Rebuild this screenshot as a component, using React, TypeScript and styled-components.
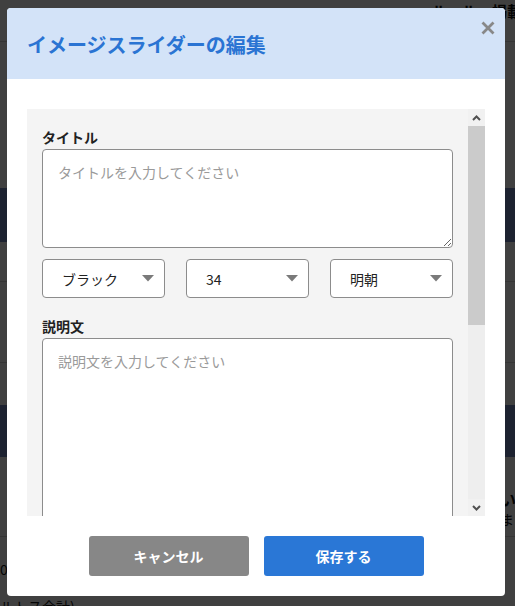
import React from "react";
import styled, { createGlobalStyle } from "styled-components";

const GlobalStyle = createGlobalStyle`
  html, body { margin: 0; padding: 0; }
  body {
    font-family: "Noto Sans CJK JP", "Noto Sans", sans-serif;
    background: #ffffff;
    overflow: hidden;
  }
  * { box-sizing: border-box; }
`;

/* ---------- background page ---------- */

const Page = styled.div`
  width: 515px;
  height: 606px;
  overflow: hidden;
  display: flex;
  flex-direction: column;
  color: #111;
`;

const TopBar = styled.header`
  height: 42px;
  flex-shrink: 0;
  border-bottom: 1px solid #d4d4d4;
  display: flex;
  justify-content: flex-end;
  align-items: flex-start;
  white-space: nowrap;
  overflow: hidden;
`;

const TopBarText = styled.span`
  font-size: 15px;
  font-weight: 700;
  line-height: 22px;
  margin-right: -7px;
`;

const Band = styled.div<{ $h: number; $tone?: "navy" | "plain"; $line?: boolean }>`
  height: ${(p) => p.$h}px;
  flex-shrink: 0;
  background: ${(p) => (p.$tone === "navy" ? "#7488c0" : "#ffffff")};
  border-bottom: ${(p) => (p.$line ? "1px solid #d4d4d4" : "none")};
`;

const InfoBand = styled(Band)`
  display: flex;
  flex-direction: column;
  padding: 32px 0 0 500px;
  white-space: nowrap;
`;

const InfoStrong = styled.span`
  font-size: 16px;
  font-weight: 700;
  line-height: 20px;
`;

const InfoText = styled.span`
  font-size: 14px;
  line-height: 20px;
`;

const FootBand = styled.div`
  flex: 1;
  display: flex;
  flex-direction: column;
  padding-top: 22px;
  white-space: nowrap;
`;

const FootText = styled.span`
  font-size: 14px;
  line-height: 20px;
  margin-bottom: 17px;
`;

/* ---------- modal ---------- */

const Overlay = styled.div`
  position: fixed;
  inset: 0;
  background: rgba(0, 0, 0, 0.75);
  display: flex;
  align-items: flex-start;
  padding: 8px 0 0 7px;
`;

const Dialog = styled.div`
  position: relative;
  width: 498px;
  height: 588px;
  background: #ffffff;
  border-radius: 4px;
  overflow: hidden;
  display: flex;
  flex-direction: column;
`;

const Header = styled.div`
  height: 71px;
  flex-shrink: 0;
  background: #d3e3f8;
  display: flex;
  align-items: center;
  padding: 2px 20px 0;
`;

const Title = styled.h2`
  margin: 0;
  font-size: 20px;
  font-weight: 700;
  line-height: 28px;
  color: #2a74d3;
`;

const CloseButton = styled.button`
  position: absolute;
  top: 12px;
  right: 9px;
  width: 16px;
  height: 16px;
  padding: 0;
  border: none;
  background: transparent;
  display: flex;
  align-items: center;
  justify-content: center;
  cursor: pointer;
`;

const Body = styled.div`
  flex: 1;
  display: flex;
  flex-direction: column;
  gap: 20px;
  padding: 30px 20px 20px;
`;

const Panel = styled.div`
  height: 407px;
  flex-shrink: 0;
  background: #f4f4f4;
  display: flex;
`;

const ScrollContent = styled.div`
  flex: 1;
  min-width: 0;
  overflow-y: auto;
  scrollbar-width: none;
  padding: 18px 15px 20px;
`;

const ScrollRail = styled.div`
  width: 17px;
  flex-shrink: 0;
  display: flex;
  flex-direction: column;
  background: #eeeeee;
`;

const RailButton = styled.div`
  height: 17px;
  flex-shrink: 0;
  background: #f1f1f1;
  display: flex;
  align-items: center;
  justify-content: center;
`;

const RailThumb = styled.div<{ $h: number }>`
  height: ${(p) => p.$h}px;
  flex-shrink: 0;
  background: #cbcbcb;
`;

const RailTrack = styled.div`
  flex: 1;
`;

const Field = styled.div<{ $gap?: number }>`
  display: flex;
  flex-direction: column;
  margin-top: ${(p) => p.$gap ?? 0}px;
`;

const Label = styled.label`
  font-size: 14px;
  font-weight: 700;
  line-height: 20px;
  color: #222;
  margin-bottom: 2px;
`;

const TextArea = styled.textarea<{ $h: number }>`
  display: block;
  width: 100%;
  height: ${(p) => p.$h}px;
  border: 1px solid #8c8c8c;
  border-radius: 4px;
  background: #ffffff;
  padding: 12px 15px;
  font-family: inherit;
  font-size: 14px;
  line-height: 20px;
  color: #222;
  resize: vertical;
  outline: none;
  &::placeholder { color: #9a9a9a; }
`;

const TextInput = styled.input`
  display: block;
  width: 100%;
  height: 40px;
  border: 1px solid #8c8c8c;
  border-radius: 4px;
  background: #ffffff;
  padding: 0 15px;
  font-family: inherit;
  font-size: 14px;
  outline: none;
  &::placeholder { color: #9a9a9a; }
`;

const SelectRow = styled.div`
  display: flex;
  justify-content: space-between;
  margin-top: 11px;
`;

const SelectBox = styled.div`
  width: 123px;
  height: 39px;
  border: 1px solid #8c8c8c;
  border-radius: 4px;
  background: #ffffff;
  display: flex;
  align-items: center;
  justify-content: space-between;
  padding: 0 10px 0 19px;
  font-size: 14px;
  line-height: 20px;
  color: #222;
`;

const Footer = styled.div`
  display: flex;
  justify-content: center;
  gap: 15px;
`;

const ActionButton = styled.button<{ $variant: "cancel" | "save" }>`
  width: 160px;
  height: 40px;
  border: none;
  border-radius: 3px;
  background: ${(p) => (p.$variant === "save" ? "#2a77d6" : "#878787")};
  color: #ffffff;
  font-family: inherit;
  font-size: 14px;
  font-weight: 700;
  cursor: pointer;
`;

const Caret = () => (
  <svg width="12" height="7" viewBox="0 0 12 7">
    <polygon points="0,0 12,0 6,6.5" fill="#7a7a7a" />
  </svg>
);

const Chevron = ({ dir }: { dir: "up" | "down" }) => (
  <svg width="9" height="6" viewBox="0 0 9 6">
    <path
      d={dir === "up" ? "M1 5 L4.5 1.5 L8 5" : "M1 1 L4.5 4.5 L8 1"}
      fill="none"
      stroke="#505050"
      strokeWidth="2"
    />
  </svg>
);

const CloseIcon = () => (
  <svg width="14" height="14" viewBox="0 0 14 14">
    <path d="M1.5 1.5 L12.5 12.5 M12.5 1.5 L1.5 12.5" stroke="#888" strokeWidth="2.8" strokeLinecap="butt" />
  </svg>
);

const selects = ["ブラック", "34", "明朝"];

export default function App() {
  return (
    <>
      <GlobalStyle />
      <Page>
        <TopBar>
          <TopBarText>ルール・掲載</TopBarText>
        </TopBar>
        <Band $h={146} />
        <Band $h={54} $tone="navy" />
        <Band $h={40} $line />
        <Band $h={81} $line />
        <Band $h={42} />
        <Band $h={52} $tone="navy" />
        <InfoBand $h={80} $line>
          <InfoStrong>いいね</InfoStrong>
          <InfoText>ます</InfoText>
        </InfoBand>
        <FootBand>
          <FootText>0X</FootText>
          <FootText>ルトス合計)</FootText>
        </FootBand>
      </Page>

      <Overlay>
        <Dialog role="dialog" aria-label="イメージスライダーの編集">
          <Header>
            <Title>イメージスライダーの編集</Title>
          </Header>
          <CloseButton aria-label="閉じる">
            <CloseIcon />
          </CloseButton>
          <Body>
            <Panel>
              <ScrollContent>
                <Field>
                  <Label>タイトル</Label>
                  <TextArea $h={99} placeholder="タイトルを入力してください" />
                </Field>
                <SelectRow>
                  {selects.map((s) => (
                    <SelectBox key={s}>
                      <span>{s}</span>
                      <Caret />
                    </SelectBox>
                  ))}
                </SelectRow>
                <Field $gap={18}>
                  <Label>説明文</Label>
                  <TextArea $h={200} placeholder="説明文を入力してください" />
                </Field>
                <Field $gap={18}>
                  <Label>リンクURL</Label>
                  <TextInput placeholder="https://" />
                </Field>
                <Field $gap={18}>
                  <Label>ボタンテキスト</Label>
                  <TextInput placeholder="ボタンテキストを入力してください" />
                </Field>
                <Field $gap={18}>
                  <Label>代替テキスト</Label>
                  <TextInput placeholder="代替テキストを入力してください" />
                </Field>
                <Field $gap={18}>
                  <Label>表示順</Label>
                  <TextInput placeholder="1" />
                </Field>
              </ScrollContent>
              <ScrollRail aria-hidden="true">
                <RailButton>
                  <Chevron dir="up" />
                </RailButton>
                <RailThumb $h={199} />
                <RailTrack />
                <RailButton>
                  <Chevron dir="down" />
                </RailButton>
              </ScrollRail>
            </Panel>
            <Footer>
              <ActionButton $variant="cancel">キャンセル</ActionButton>
              <ActionButton $variant="save">保存する</ActionButton>
            </Footer>
          </Body>
        </Dialog>
      </Overlay>
    </>
  );
}
